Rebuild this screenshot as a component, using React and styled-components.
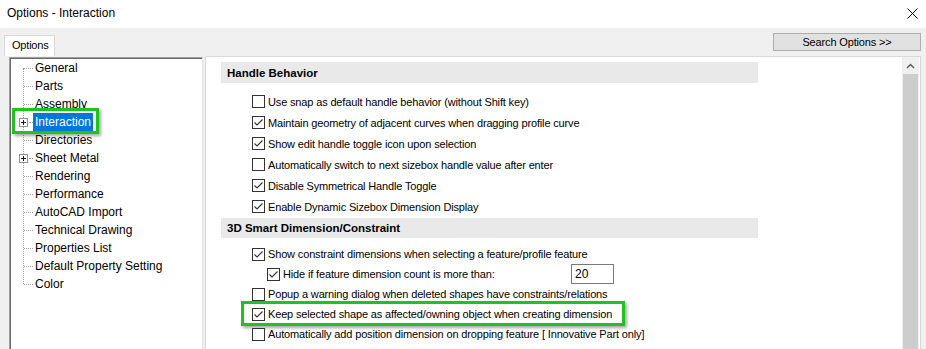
import React from 'react';
import styled, { createGlobalStyle } from 'styled-components';

const GlobalStyle = createGlobalStyle`
  html, body {
    margin: 0;
    padding: 0;
    background: #f0f0f0;
  }
  body {
    width: 926px;
    height: 349px;
    overflow: hidden;
    font-family: "Liberation Sans", Arial, sans-serif;
    color: #000;
  }
`;

const treeItems = [
  { label: 'General' },
  { label: 'Parts' },
  { label: 'Assembly' },
  { label: 'Interaction', expandable: true, selected: true },
  { label: 'Directories' },
  { label: 'Sheet Metal', expandable: true },
  { label: 'Rendering' },
  { label: 'Performance' },
  { label: 'AutoCAD Import' },
  { label: 'Technical Drawing' },
  { label: 'Properties List' },
  { label: 'Default Property Setting' },
  { label: 'Color' },
];

const handleOptions = [
  { text: 'Use snap as default handle behavior (without Shift key)', checked: false },
  { text: 'Maintain geometry of adjacent curves when dragging profile curve', checked: true },
  { text: 'Show edit handle toggle icon upon selection', checked: true },
  { text: 'Automatically switch to next sizebox handle value after enter', checked: false },
  { text: 'Disable Symmetrical Handle Toggle', checked: true },
  { text: 'Enable Dynamic Sizebox Dimension Display', checked: true },
];

const Window = styled.div`
  width: 926px;
  height: 349px;
  display: flex;
  flex-direction: column;
  background: #f0f0f0;
  overflow: hidden;
`;

const TitleBar = styled.div`
  height: 28px;
  flex: none;
  box-sizing: border-box;
  padding: 0 8px 2px 7px;
  background: #fff;
  display: flex;
  align-items: center;
  justify-content: space-between;
  font-size: 12px;
`;

const Client = styled.div`
  flex: 1;
  min-height: 0;
  display: flex;
  flex-direction: column;
  padding: 5px 0 0 4px;
`;

const TopRow = styled.div`
  height: 23px;
  flex: none;
  display: flex;
  justify-content: space-between;
  align-items: flex-start;
`;

const Tab = styled.div`
  margin-top: 2px;
  height: 21px;
  width: 51px;
  box-sizing: border-box;
  padding-left: 7px;
  border: 1px solid #d9d9d9;
  border-bottom: none;
  background: #fff;
  font-size: 11px;
  letter-spacing: -0.2px;
  line-height: 19px;
`;

const SearchButton = styled.div`
  width: 148px;
  height: 18px;
  margin-right: 5px;
  box-sizing: border-box;
  border: 1px solid #adadad;
  background: #e1e1e1;
  font-size: 11px;
  letter-spacing: -0.15px;
  line-height: 16px;
  text-align: center;
`;

const TabPage = styled.div`
  flex: 1;
  min-height: 0;
  display: flex;
  gap: 2px;
  padding-left: 5px;
`;

const Tree = styled.div`
  width: 194px;
  margin-top: 1px;
  box-sizing: border-box;
  background: #fff;
  border-top: 1px solid #a0a0a0;
  border-left: 1px solid #a0a0a0;
  border-right: 1px solid #e3e3e3;
  box-shadow: inset 1px 1px 0 #696969;
  padding-top: 1px;
`;

const TreeList = styled.div`
  position: relative;
  &::before {
    content: '';
    position: absolute;
    left: 13px;
    top: 9px;
    bottom: 9px;
    border-left: 1px dotted #a0a0a0;
  }
`;

const TreeRow = styled.div`
  position: relative;
  height: 18px;
  display: flex;
  align-items: center;
  ${(p) =>
    p.$marked &&
    `
    &::after {
      content: '';
      position: absolute;
      left: 2px;
      top: -5px;
      width: 87px;
      height: 26px;
      box-sizing: border-box;
      border: 3px solid #1fc21f;
      box-shadow: 2px 2px 3px rgba(0, 0, 0, 0.35);
    }
  `}
`;

const Gutter = styled.div`
  width: 23px;
  flex: none;
  display: flex;
  align-items: center;
`;

const Branch = styled.span`
  display: block;
  margin-left: ${(p) => p.$left}px;
  width: ${(p) => p.$width}px;
  border-top: 1px dotted #a0a0a0;
`;

const Expander = styled.svg`
  display: block;
  margin-left: 9px;
  position: relative;
  z-index: 1;
`;

const TreeLabel = styled.span`
  height: 18px;
  line-height: 18px;
  padding: 0 2px;
  font-size: 12px;
  white-space: nowrap;
  background: ${(p) => (p.$selected ? '#0078d7' : 'transparent')};
  color: ${(p) => (p.$selected ? '#fff' : '#000')};
`;

const OptionsPanel = styled.div`
  flex: 1;
  margin-right: 5px;
  display: flex;
  background: #fff;
  border: 1px solid #d9d9d9;
  border-bottom: none;
`;

const Content = styled.div`
  flex: 1;
  padding: 5px 0 0 15px;
`;

const Section = styled.div`
  margin-top: ${(p) => p.$top || 0}px;
`;

const Band = styled.div`
  width: 537px;
  height: ${(p) => p.$height}px;
  margin-bottom: ${(p) => p.$gap}px;
  box-sizing: border-box;
  padding-left: 6px;
  display: flex;
  align-items: center;
  background: #e9e9e9;
  font-size: 11.5px;
  font-weight: bold;
`;

const OptionRow = styled.div`
  position: relative;
  height: ${(p) => p.$height}px;
  padding-left: ${(p) => 31 + (p.$indent || 0)}px;
  display: flex;
  align-items: center;
  ${(p) =>
    p.$marked &&
    `
    &::after {
      content: '';
      position: absolute;
      left: 20px;
      top: -3px;
      width: 384px;
      height: 25px;
      box-sizing: border-box;
      border: 3px solid #1fc21f;
      box-shadow: 2px 2px 3px rgba(0, 0, 0, 0.35);
    }
  `}
`;

const Box = styled.span`
  width: 13px;
  height: 13px;
  flex: none;
  box-sizing: border-box;
  border: 1px solid #333;
  background: #fff;
  display: flex;
`;

const OptionText = styled.span`
  margin-left: 3px;
  font-size: 11px;
  letter-spacing: -0.15px;
  white-space: nowrap;
  width: ${(p) => (p.$width ? `${p.$width}px` : 'auto')};
`;

const NumberField = styled.div`
  width: 43px;
  height: 20px;
  box-sizing: border-box;
  border: 1px solid #7a7a7a;
  padding-left: 3px;
  font-size: 12px;
  line-height: 18px;
  background: #fff;
`;

const Scrollbar = styled.div`
  width: 17px;
  margin-right: 1px;
  flex: none;
  display: flex;
  flex-direction: column;
  background: #f0f0f0;
`;

const ArrowButton = styled.div`
  height: 17px;
  flex: none;
  display: flex;
  align-items: center;
  justify-content: center;
`;

const Thumb = styled.div`
  flex: 1;
  margin: 0 1px;
  background: #cdcdcd;
`;

const Check = ({ checked }) => (
  <Box>
    {checked && (
      <svg width="11" height="11" viewBox="0 0 11 11">
        <polyline points="1.5,5.5 4,8 9.5,2.5" fill="none" stroke="#333" strokeWidth="1.1" />
      </svg>
    )}
  </Box>
);

const Option = ({ checked, text, height, indent, marked, width, children }) => (
  <OptionRow $height={height} $indent={indent} $marked={marked}>
    <Check checked={checked} />
    <OptionText $width={width}>{text}</OptionText>
    {children}
  </OptionRow>
);

const PlusBox = () => (
  <Expander width="9" height="9" viewBox="0 0 9 9">
    <rect x="0.5" y="0.5" width="8" height="8" fill="#fff" stroke="#919191" />
    <line x1="2" y1="4.5" x2="7" y2="4.5" stroke="#1a1a1a" />
    <line x1="4.5" y1="2" x2="4.5" y2="7" stroke="#1a1a1a" />
  </Expander>
);

export default function App() {
  return (
    <>
      <GlobalStyle />
      <Window>
        <TitleBar>
          <span>Options - Interaction</span>
          <svg width="11" height="11" viewBox="0 0 11 11">
            <path d="M0.5 0.5 L10.5 10.5 M10.5 0.5 L0.5 10.5" stroke="#000" strokeWidth="1" />
          </svg>
        </TitleBar>
        <Client>
          <TopRow>
            <Tab>Options</Tab>
            <SearchButton>Search Options &gt;&gt;</SearchButton>
          </TopRow>
          <TabPage>
            <Tree>
              <TreeList>
                {treeItems.map((item) => (
                  <TreeRow key={item.label} $marked={item.selected}>
                    <Gutter>
                      {item.expandable ? (
                        <>
                          <PlusBox />
                          <Branch $left={1} $width={4} />
                        </>
                      ) : (
                        <Branch $left={14} $width={9} />
                      )}
                    </Gutter>
                    <TreeLabel $selected={item.selected}>{item.label}</TreeLabel>
                  </TreeRow>
                ))}
              </TreeList>
            </Tree>
            <OptionsPanel>
              <Content>
                <Section>
                  <Band $height={21} $gap={8}>Handle Behavior</Band>
                  {handleOptions.map((o) => (
                    <Option key={o.text} height={21} checked={o.checked} text={o.text} />
                  ))}
                </Section>
                <Section $top={1}>
                  <Band $height={20} $gap={6}>3D Smart Dimension/Constraint</Band>
                  <Option
                    height={20}
                    checked
                    text="Show constraint dimensions when selecting a feature/profile feature"
                  />
                  <Option
                    height={20}
                    indent={15}
                    width={288}
                    checked
                    text="Hide if feature dimension count is more than:"
                  >
                    <NumberField>20</NumberField>
                  </Option>
                  <Option
                    height={20}
                    checked={false}
                    text="Popup a warning dialog when deleted shapes have constraints/relations"
                  />
                  <Option
                    height={20}
                    marked
                    checked
                    text="Keep selected shape as affected/owning object when creating dimension"
                  />
                  <Option
                    height={20}
                    checked={false}
                    text="Automatically add position dimension on dropping feature [ Innovative Part only]"
                  />
                </Section>
              </Content>
              <Scrollbar>
                <ArrowButton>
                  <svg width="9" height="6" viewBox="0 0 9 6">
                    <polyline points="1,5 4.5,1.5 8,5" fill="none" stroke="#606060" strokeWidth="1.5" />
                  </svg>
                </ArrowButton>
                <Thumb />
              </Scrollbar>
            </OptionsPanel>
          </TabPage>
        </Client>
      </Window>
    </>
  );
}
